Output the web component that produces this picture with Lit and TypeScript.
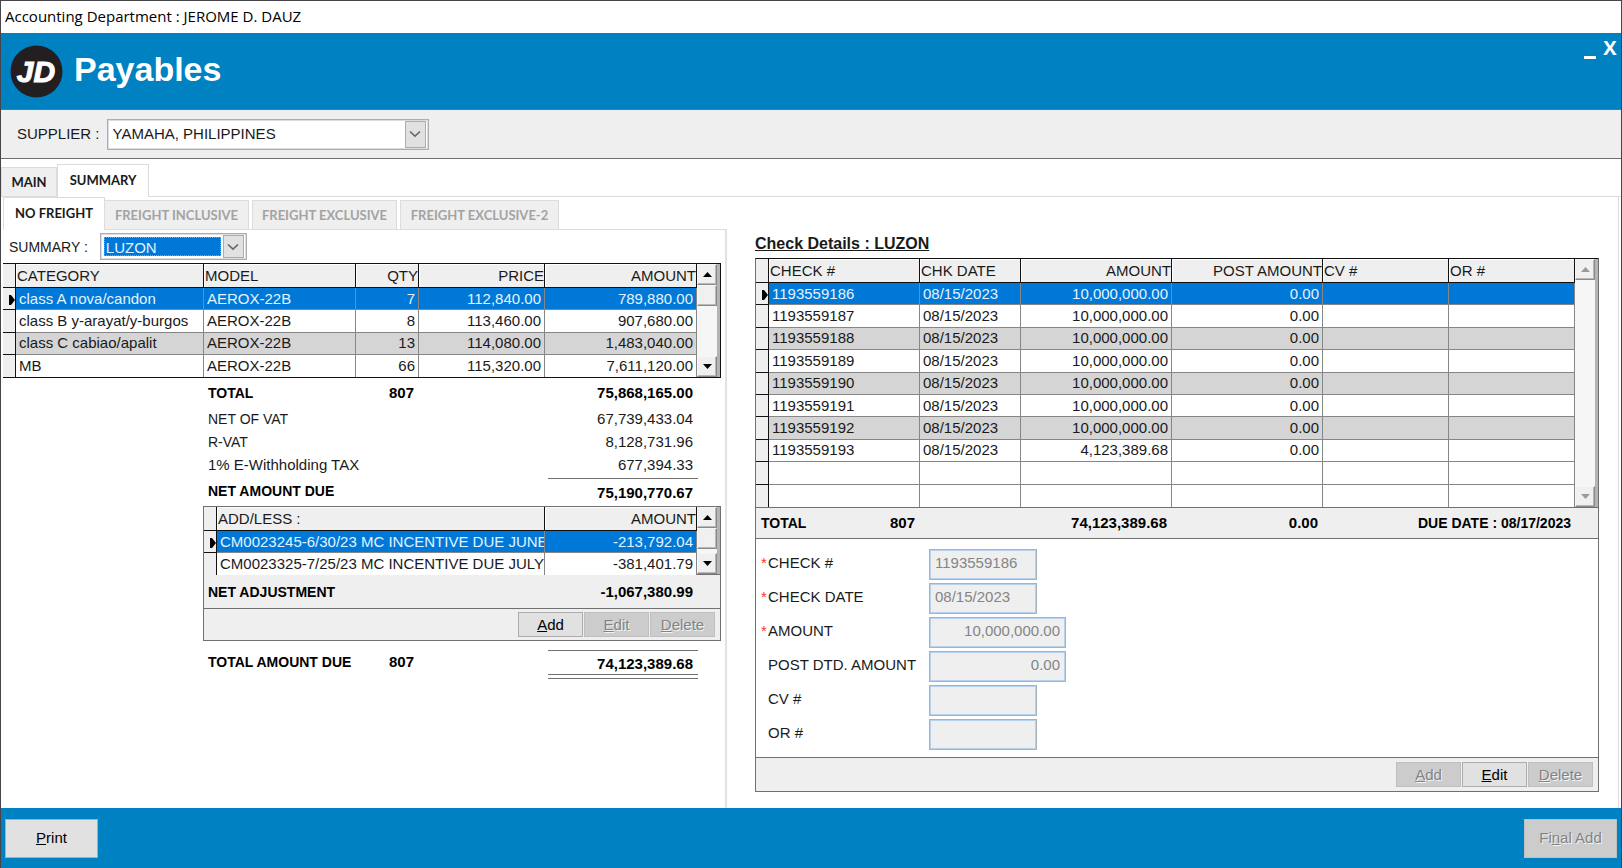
import { LitElement, html, css, svg, nothing } from "lit";
import { customElement, property } from "lit/decorators.js";
import { classMap } from "lit/directives/class-map.js";
import { styleMap } from "lit/directives/style-map.js";

interface Column {
  title: string;
  width?: number;
  numeric?: boolean;
}

const stockColumns: Column[] = [
  { title: "CATEGORY", width: 188 },
  { title: "MODEL", width: 152 },
  { title: "QTY", width: 63, numeric: true },
  { title: "PRICE", width: 126, numeric: true },
  { title: "AMOUNT", numeric: true },
];
const stockRows = [
  ["class A nova/candon", "AEROX-22B", "7", "112,840.00", "789,880.00"],
  ["class B y-arayat/y-burgos", "AEROX-22B", "8", "113,460.00", "907,680.00"],
  ["class C cabiao/apalit", "AEROX-22B", "13", "114,080.00", "1,483,040.00"],
  ["MB", "AEROX-22B", "66", "115,320.00", "7,611,120.00"],
];

const adjustColumns: Column[] = [
  { title: "ADD/LESS :", width: 328 },
  { title: "AMOUNT", numeric: true },
];
const adjustRows = [
  ["CM0023245-6/30/23 MC INCENTIVE DUE JUNE", "-213,792.04"],
  ["CM0023325-7/25/23 MC INCENTIVE DUE JULY", "-381,401.79"],
];

const checkColumns: Column[] = [
  { title: "CHECK #", width: 151 },
  { title: "CHK DATE", width: 101 },
  { title: "AMOUNT", width: 151, numeric: true },
  { title: "POST AMOUNT", width: 151, numeric: true },
  { title: "CV #", width: 126 },
  { title: "OR #" },
];
const checkRows = [
  ...[186, 187, 188, 189, 190, 191, 192].map((n) => [
    `1193559${n}`, "08/15/2023", "10,000,000.00", "0.00", "", "",
  ]),
  ["1193559193", "08/15/2023", "4,123,389.68", "0.00", "", ""],
  ["", "", "", "", "", ""],
  ["", "", "", "", "", ""],
];

const chevron = svg`<svg width="12" height="8" viewBox="0 0 12 8" aria-hidden="true">
  <path d="M1 1.5 L6 6.2 L11 1.5" fill="none" stroke="#666" stroke-width="1.6"/></svg>`;

@customElement("data-grid")
class DataGrid extends LitElement {
  @property({ attribute: false }) columns: Column[] = [];
  @property({ attribute: false }) rows: string[][] = [];
  @property({ type: Boolean }) idle = false;
  @property() label = "";

  static styles = css`
    :host {
      display: flex;
      font: 15px/20px "Liberation Sans", Arial, sans-serif;
      color: #1a1a1a;
    }
    .table {
      flex: 1;
      width: 100%;
      min-width: 0;
      height: 100%;
      table-layout: fixed;
      border-collapse: separate;
      border-spacing: 0;
      background: #fff;
    }
    .head { height: 24px; }
    .body tr { height: 22px; }
    .mark { width: 13px; }
    th, td {
      padding: 0 3px;
      border: 0 solid #868686;
      border-width: 0 1px 1px 0;
      text-align: left;
      font-weight: 400;
      white-space: nowrap;
      overflow: hidden;
    }
    .body tr:last-child > * { border-bottom-width: 0; }
    .head th {
      padding: 0 1px;
      background: #efefef;
      border-color: #111;
      box-shadow: inset 1px 1px #fff;
    }
    .table .rowhead, .table .corner {
      padding: 0;
      background: #efefef;
      border-color: #111;
      box-shadow: none;
    }
    .table .numeric { text-align: right; }
    .head .numeric { padding: 0; }
    .alt td { background: #d5d5d5; }
    .current td { background: #0078d7; color: #e4f3ff; }
    .rowhead svg { display: block; margin: 2px 0 0 6px; }
    .scroll {
      width: 23px;
      flex: none;
      box-sizing: border-box;
      padding-right: 3px;
      display: flex;
      flex-direction: column;
      background: linear-gradient(90deg, #f6f6f6 20px, #b4b4b4 20px);
    }
    .step, .thumb {
      height: 21px;
      flex: none;
      box-sizing: border-box;
      padding: 0;
      border: 1px solid;
      border-color: #f6f6f6 #8a8a8a #8a8a8a #f6f6f6;
      box-shadow: inset -1px -1px #b8b8b8;
      background: #f0f0f0;
      display: grid;
      place-items: center;
      color: #000;
    }
    .step:disabled { color: #9a9a9a; }
    .track { flex: 1; min-height: 0; }
  `;

  render() {
    return html`
      <table class="table" aria-label=${this.label}>
        <colgroup>
          <col class="mark" />
          ${this.columns.map((c) => html`<col style=${styleMap(c.width ? { width: `${c.width}px` } : {})} />`)}
        </colgroup>
        <thead>
          <tr class="head">
            <th class="corner"></th>
            ${this.columns.map((c) => html`<th scope="col" class=${classMap({ numeric: !!c.numeric })}>${c.title}</th>`)}
          </tr>
        </thead>
        <tbody class="body">
          ${this.rows.map((row, i) => html`
            <tr class=${classMap({ current: i === 0, alt: i % 2 === 0 && i > 0 && row[0] !== "" })}>
              <td class="rowhead">${i === 0
                ? svg`<svg width="6" height="10" viewBox="0 0 6 10" aria-hidden="true"><path d="M0 0H2L6 5L2 10H0Z"/></svg>`
                : nothing}</td>
              ${row.map((v, k) => html`<td class=${classMap({ numeric: !!this.columns[k].numeric })}>${v}</td>`)}
            </tr>`)}
        </tbody>
      </table>
      <div class="scroll">
        <button class="step" aria-label="Scroll up" ?disabled=${this.idle}>
          <svg width="9" height="5" viewBox="0 0 9 5"><path fill="currentColor" d="M0 5L4.5 0L9 5Z"/></svg>
        </button>
        ${this.idle ? nothing : html`<div class="thumb"></div>`}
        <div class="track"></div>
        <button class="step" aria-label="Scroll down" ?disabled=${this.idle}>
          <svg width="9" height="5" viewBox="0 0 9 5"><path fill="currentColor" d="M0 0L4.5 5L9 0Z"/></svg>
        </button>
      </div>`;
  }
}

@customElement("app-root")
class AppRoot extends LitElement {
  static styles = css`
    :host {
      display: flex;
      flex-direction: column;
      box-sizing: border-box;
      min-height: 100vh;
      border: 1px solid #45454b;
      border-bottom: 0;
      background: #fff;
      color: #1a1a1a;
      font: 15px/20px "Liberation Sans", Arial, sans-serif;
    }
    * { box-sizing: border-box; }
    button, input, select { font: inherit; color: inherit; margin: 0; }

    .titlebar {
      height: 32px;
      padding: 0 4px 2px;
      display: flex;
      align-items: center;
      font: 15px/20px "Open Sans", "Noto Sans", sans-serif;
      color: #000;
    }
    .banner {
      height: 76px;
      padding: 0 3px 0 9px;
      display: flex;
      align-items: center;
      gap: 11px;
      background: #0081c2;
      color: #fff;
    }
    .banner h1 { flex: 1; margin: 0; padding-bottom: 4px; font-size: 34px; line-height: 40px; }
    .window-buttons {
      align-self: flex-start;
      display: flex;
      gap: 4px;
      padding-top: 4px;
    }
    .window-buttons button {
      border: 0;
      padding: 0;
      width: 16px;
      height: 22px;
      background: none;
      font: 700 20px/22px "Open Sans", sans-serif;
    }
    .window-buttons svg { display: block; margin: 19px auto 0; }
    .supplier {
      height: 50px;
      padding: 0 16px;
      display: flex;
      align-items: center;
      gap: 7px;
      background: #efefef;
      border: solid #707070;
      border-width: 1px 0;
    }

    .combo {
      display: flex;
      padding: 1px 2px 1px 1px;
      border: 1px solid #abadb3;
      outline: 1px solid #dcdce2;
      outline-offset: -2px;
      background: #fff;
    }
    .combo select {
      flex: 1;
      min-width: 0;
      appearance: none;
      border: 0;
      border-radius: 0;
      padding: 0 4px;
      background: none;
      outline: none;
    }
    .combo .drop {
      width: 21px;
      display: grid;
      place-items: center;
      border: 1px solid #adadad;
      background: #e1e1e1;
      pointer-events: none;
    }
    .combo.wide { width: 322px; height: 31px; }
    .combo.small { width: 147px; height: 27px; }
    .combo.small select {
      margin: 2px;
      padding: 0 1px;
      border: 1px dotted #f28a28;
      background: #0078d7;
      color: #e4f3ff;
    }

    .tabs {
      display: flex;
      align-items: flex-end;
      border-bottom: 1px solid #dcdcdc;
      font: 700 13px/20px Lato, sans-serif;
    }
    .tabs button {
      height: 29px;
      padding: 0;
      border: 1px solid #dcdcdc;
      border-bottom: 0;
      background: #efefef;
    }
    .tabs .active {
      height: 33px;
      margin-bottom: -1px;
      padding-bottom: 3px;
      background: #fff;
    }
    .tabs button:disabled { color: #a3a3a3; }
    .primary { padding-top: 5px; }
    .primary button { width: 56px; }
    .primary .active { width: 92px; }
    .secondary { gap: 3px; }
    .secondary .freight { width: 145px; }
    .secondary .freight.two { width: 159px; }
    .secondary .active { width: 102px; margin-right: -4px; }

    .content {
      flex: 1;
      display: grid;
      grid-template-columns: 724px minmax(0, 1fr);
      margin: 0 2px;
      border-right: 1px solid #dcdcdc;
    }
    .left { display: flex; flex-direction: column; }
    .page { flex: 1; padding-right: 4px; border-right: 2px solid #e2e2e2; }
    .filter {
      height: 33px;
      display: flex;
      align-items: center;
      gap: 12px;
      padding-left: 6px;
    }
    .stock {
      height: 115px;
      border: 1px solid #111;
      border-left: 0;
    }
    .under { margin-left: 200px; }
    .sum {
      height: 23px;
      display: grid;
      grid-template-columns: 145px 61px 1fr 150px;
      align-items: center;
      padding: 0 23px 0 5px;
      white-space: nowrap;
    }
    .sum > :nth-child(2), .sum > :last-child { text-align: right; }
    .label { font-size: 14px; }
    .strong { font-weight: 700; color: #000; }
    .figure { grid-column: 4; padding-right: 5px; }
    .sum.total { height: 29px; }
    .sum.net { height: 30px; }
    .sum.net .figure, .sum.due .figure { border-top: 1px solid #707070; }
    .sum.net .figure { padding-top: 4px; height: 26px; }
    .sum.due { height: 42px; }
    .sum.due .figure {
      height: 25px;
      padding-top: 3px;
      border-bottom: 1px solid #707070;
      box-shadow: 0 3px #fff, 0 4px #707070;
    }
    .adjust { border: 1px solid #707070; background: #efefef; }
    .adjust data-grid { height: 68px; border-bottom: 1px solid #707070; }
    .adjust .sum { height: 34px; padding: 0 22px 0 4px; border-bottom: 1px solid #707070; }

    .actions { display: flex; justify-content: flex-end; gap: 1px; padding: 3px 5px; }
    .push {
      width: 65px;
      height: 25px;
      padding: 0;
      border: 1px solid #adadad;
      background: #e1e1e1;
      color: #000;
    }
    .push:disabled {
      border-color: #bfbfbf;
      background: #cccccc;
      color: #838383;
      text-shadow: 1px 1px #f4f4f4;
    }
    .push.large { width: 93px; height: 39px; }

    .right { padding: 35px 19px 0 28px; }
    .right h2 { margin: 0 0 2px; font-size: 16px; line-height: 24px; text-decoration: underline; }
    .card { border: 1px solid #707070; border-top-color: #111; }
    .card data-grid { height: 249px; border-bottom: 1px solid #707070; }
    .totals {
      height: 31px;
      display: grid;
      grid-template-columns: 159px 252px 151px 1fr;
      align-items: center;
      background: #efefef;
      border-bottom: 1px solid #707070;
      text-align: right;
    }
    .totals .pair { display: flex; justify-content: space-between; padding-left: 5px; }
    .totals .until { padding-right: 27px; }
    .form {
      display: grid;
      grid-template-columns: 168px 1fr;
      grid-auto-rows: 31px;
      row-gap: 3px;
      padding: 10px 5px 7px;
    }
    .form label { display: flex; line-height: 28px; }
    .star { width: 7px; color: #f33; }
    .form input {
      width: 108px;
      padding: 0 5px 3px;
      border: 1px solid #a7b1bf;
      box-shadow: inset 0 0 0 1px #b8d2ee;
      border-radius: 0;
      background: #efefef;
      color: #858585;
    }
    .form .money { width: 137px; text-align: right; }
    .card .actions { background: #efefef; border-top: 1px solid #707070; padding: 4px 5px; }

    .footer {
      height: 60px;
      padding: 0 4px;
      display: flex;
      align-items: center;
      justify-content: space-between;
      background: #0081c2;
    }
  `;

  private field(id: string, label: string, value: string, required = false, money = false) {
    return html`
      <label for=${id}><span class="star">${required ? "*" : ""}</span>${label}</label>
      <input id=${id} class=${money ? "money" : ""} .value=${value} disabled />`;
  }

  render() {
    return html`
      <div class="titlebar">Accounting Department : JEROME D. DAUZ</div>
      <header class="banner">
        <svg width="53" height="53" viewBox="0 0 53 53" role="img" aria-label="JD">
          <circle cx="26.5" cy="26.5" r="26" fill="#231f20" />
          <text x="26" y="37" text-anchor="middle" fill="#fff" stroke="#fff" stroke-width="1"
            font-family="Liberation Sans, Arial, sans-serif"
            font-size="30" font-weight="700" font-style="italic">JD</text>
        </svg>
        <h1>Payables</h1>
        <div class="window-buttons">
          <button aria-label="Minimize">
            <svg width="12" height="3" viewBox="0 0 12 3"><rect width="12" height="3" fill="#fff" /></svg>
          </button>
          <button aria-label="Close">X</button>
        </div>
      </header>
      <div class="supplier">
        <label for="supplier">SUPPLIER :</label>
        <div class="combo wide">
          <select id="supplier"><option>YAMAHA, PHILIPPINES</option></select>
          <span class="drop">${chevron}</span>
        </div>
      </div>
      <nav class="tabs primary">
        <button>MAIN</button>
        <button class="active">SUMMARY</button>
      </nav>
      <main class="content">
        <section class="left">
          <nav class="tabs secondary">
            <button class="active">NO FREIGHT</button>
            <button class="freight" disabled>FREIGHT INCLUSIVE</button>
            <button class="freight" disabled>FREIGHT EXCLUSIVE</button>
            <button class="freight two" disabled>FREIGHT EXCLUSIVE-2</button>
          </nav>
          <div class="page">
            <div class="filter">
              <label class="label" for="area">SUMMARY :</label>
              <div class="combo small">
                <select id="area"><option>LUZON</option></select>
                <span class="drop">${chevron}</span>
              </div>
            </div>
            <data-grid class="stock" label="Summary" .columns=${stockColumns} .rows=${stockRows}></data-grid>
            <div class="under">
              <div class="sum total strong">
                <span class="label">TOTAL</span><span>807</span><span class="figure">75,868,165.00</span>
              </div>
              <div class="sum"><span class="label">NET OF VAT</span><span class="figure">67,739,433.04</span></div>
              <div class="sum"><span class="label">R-VAT</span><span class="figure">8,128,731.96</span></div>
              <div class="sum"><span>1% E-Withholding TAX</span><span class="figure">677,394.33</span></div>
              <div class="sum net strong">
                <span class="label">NET AMOUNT DUE</span><span class="figure">75,190,770.67</span>
              </div>
              <div class="adjust">
                <data-grid label="Add/Less" .columns=${adjustColumns} .rows=${adjustRows}></data-grid>
                <div class="sum strong">
                  <span class="label">NET ADJUSTMENT</span><span class="figure">-1,067,380.99</span>
                </div>
                <div class="actions">
                  <button class="push"><u>A</u>dd</button>
                  <button class="push" disabled><u>E</u>dit</button>
                  <button class="push" disabled><u>D</u>elete</button>
                </div>
              </div>
              <div class="sum due strong">
                <span class="label">TOTAL AMOUNT DUE</span><span>807</span><span class="figure">74,123,389.68</span>
              </div>
            </div>
          </div>
        </section>
        <section class="right">
          <h2>Check Details : LUZON</h2>
          <div class="card">
            <data-grid idle label="Check details" .columns=${checkColumns} .rows=${checkRows}></data-grid>
            <div class="totals strong">
              <span class="pair"><span class="label">TOTAL</span><span>807</span></span>
              <span>74,123,389.68</span>
              <span>0.00</span>
              <span class="label until">DUE DATE : 08/17/2023</span>
            </div>
            <div class="form">
              ${this.field("check", "CHECK #", "1193559186", true)}
              ${this.field("date", "CHECK DATE", "08/15/2023", true)}
              ${this.field("amount", "AMOUNT", "10,000,000.00", true, true)}
              ${this.field("post", "POST DTD. AMOUNT", "0.00", false, true)}
              ${this.field("cv", "CV #", "")}
              ${this.field("or", "OR #", "")}
            </div>
            <div class="actions">
              <button class="push" disabled><u>A</u>dd</button>
              <button class="push"><u>E</u>dit</button>
              <button class="push" disabled><u>D</u>elete</button>
            </div>
          </div>
        </section>
      </main>
      <footer class="footer">
        <button class="push large"><u>P</u>rint</button>
        <button class="push large" disabled>Fi<u>n</u>al Add</button>
      </footer>`;
  }
}
